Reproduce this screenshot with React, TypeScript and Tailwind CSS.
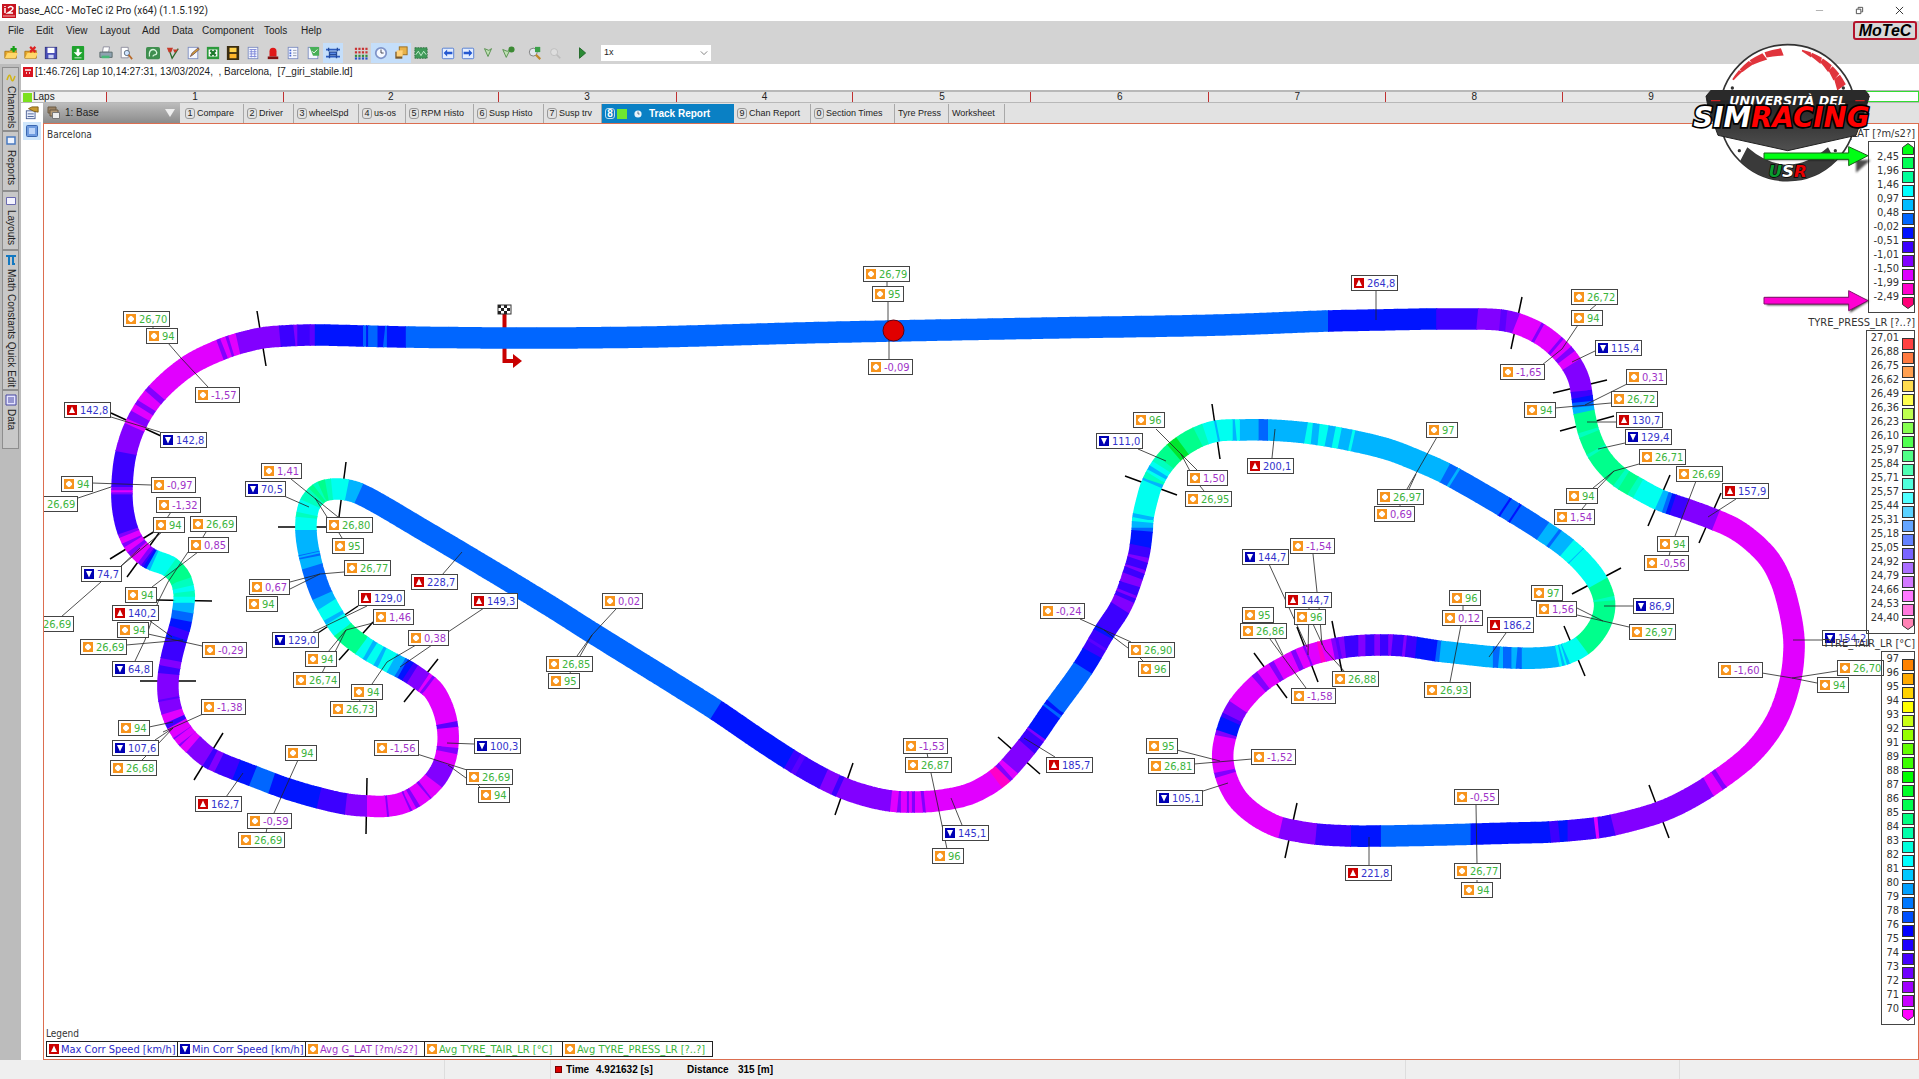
import React from 'react';

type Pt = [number, number];

/* ---------- track geometry ---------- */

const ORIGIN_X = 44;
const ORIGIN_Y = 124;

const CENTRE: Pt[] = [
  [405, 337], [504, 338], [550, 338], [650, 337], [800, 333], [893, 331], [1050, 328], [1220, 325], [1328, 321], [1377, 320], [1432, 319],
  [1475, 319], [1500, 320], [1518, 324], [1540, 334], [1559, 349], [1572, 365], [1579, 380], [1582, 396], [1584, 412], [1590, 436], [1601, 458],
  [1618, 476], [1639, 489], [1660, 500], [1686, 509], [1713, 519], [1735, 529], [1754, 543], [1770, 560], [1781, 581], [1788, 604], [1793, 630], [1794, 650],
  [1790, 682], [1776, 721], [1752, 753], [1717, 781], [1690, 798], [1660, 812], [1613, 825], [1595, 828], [1550, 832], [1513, 833], [1440, 835],
  [1382, 836], [1350, 836], [1316, 834], [1291, 830], [1276, 826], [1254, 814], [1237, 798], [1227, 779], [1223, 762], [1223, 750], [1226, 735],
  [1231, 720], [1240, 704], [1261, 682], [1288, 665], [1310, 655], [1346, 647], [1380, 645], [1405, 646], [1438, 651], [1456, 653], [1495, 657],
  [1538, 658], [1562, 655], [1583, 645], [1598, 628], [1604, 612], [1604, 599], [1597, 581], [1584, 564], [1567, 548], [1543, 531], [1503, 506],
  [1445, 473], [1423, 463], [1390, 450], [1354, 441], [1307, 433], [1268, 430], [1239, 430], [1217, 431], [1198, 437], [1177, 450], [1162, 466],
  [1152, 484], [1147, 500], [1143, 518], [1142, 532], [1139, 554], [1133, 575], [1121, 606], [1105, 631], [1083, 668], [1052, 711], [1034, 737],
  [1019, 756], [999, 777], [972, 793], [943, 800], [915, 802], [891, 801], [867, 796], [843, 788], [820, 777], [794, 762], [760, 740], [716, 710],
  [670, 681], [591, 632], [550, 606], [430, 534], [360, 494], [347, 490], [335, 489], [321, 492], [311, 502], [307, 514], [306, 531], [309, 553],
  [319, 588], [331, 612], [344, 631], [364, 647], [388, 661], [407, 671], [422, 681], [433, 690], [442, 706], [447, 724], [448, 743], [444, 763],
  [436, 778], [422, 792], [405, 802], [388, 806], [367, 806], [346, 804], [319, 798], [285, 788], [253, 776], [222, 764], [208, 757], [196, 747],
  [185, 736], [175, 720], [169, 700], [168, 681], [171, 660], [176, 640], [181, 622], [184, 601], [184, 592], [180, 578], [170, 567], [149, 558],
  [136, 546], [128, 531], [123, 510], [122, 487], [126, 453], [137, 422], [155, 395], [188, 366], [220, 350], [237, 344], [262, 338], [284, 336],
  [313, 335], [363, 336],
];

const PALETTE: Record<string, string> = {
  g: '#00e62e', e: '#00ff8c', t: '#00ffbe', c: '#00fff0', s: '#00b4ff', b: '#0066ff',
  d: '#0014ff', i: '#3c00ff', v: '#8200ff', m: '#e100ff', k: '#ff00c8', w: '#5a00ff',
};

/* each entry: x, y, colour that starts there */
const BANDS: [number, number, string][] = [
  [405, 337, 'b'], [1328, 321, 'd'], [1436, 319, 'i'], [1477, 319, 'v'], [1500, 320, 'w'], [1506, 321, 'v'], [1516, 323, 'm'], [1536, 332, 'v'],
  [1539, 334, 'm'], [1554, 345, 'v'], [1557, 347, 'm'], [1563, 353, 'v'], [1566, 357, 'm'], [1571, 364, 'v'], [1581, 391, 'i'], [1582, 397, 'd'], [1583, 402, 'b'], [1584, 407, 's'], [1584, 412, 'e'],
  [1588, 430, 't'], [1590, 434, 'e'], [1596, 449, 't'], [1598, 452, 'e'], [1620, 477, 't'], [1624, 479, 'e'], [1633, 486, 't'], [1638, 489, 'c'],
  [1659, 500, 's'], [1665, 502, 'b'], [1669, 503, 'd'], [1673, 505, 'i'], [1685, 509, 'v'], [1716, 520, 'm'],
  [1721, 778, 'v'], [1717, 781, 'm'], [1709, 787, 'v'], [1613, 825, 'i'], [1598, 828, 'm'], [1595, 828, 'i'], [1567, 830, 'd'], [1559, 831, 'i'],
  [1550, 832, 'd'], [1471, 835, 'b'], [1381, 836, 'd'], [1351, 836, 'i'], [1316, 834, 'v'], [1281, 828, 'm'], [1226, 775, 'v'], [1225, 771, 'm'],
  [1226, 737, 'v'], [1227, 733, 'd'], [1231, 721, 'i'], [1232, 717, 'v'], [1238, 707, 'm'], [1259, 684, 'v'], [1263, 680, 'm'], [1274, 673, 'v'],
  [1278, 670, 'm'], [1295, 661, 'v'], [1299, 659, 'm'], [1307, 656, 'v'], [1309, 655, 'm'], [1319, 652, 'k'], [1323, 651, 'm'], [1333, 649, 'v'],
  [1337, 648, 'w'], [1340, 648, 'v'], [1345, 647, 'i'], [1358, 645, 'v'], [1365, 645, 'i'], [1374, 645, 'v'], [1380, 645, 'i'], [1388, 645, 'v'],
  [1392, 645, 'i'], [1403, 646, 'v'], [1406, 646, 'i'], [1416, 647, 'd'], [1436, 651, 'b'], [1440, 651, 's'], [1493, 657, 'b'], [1499, 657, 's'],
  [1503, 657, 'b'], [1511, 658, 's'], [1517, 658, 'b'], [1522, 658, 's'], [1557, 656, 'c'], [1560, 656, 's'], [1562, 655, 'c'], [1564, 655, 's'],
  [1566, 654, 'c'], [1582, 646, 'e'], [1604, 601, 't'], [1604, 598, 'e'], [1598, 583, 'c'], [1576, 557, 's'], [1575, 556, 'c'], [1567, 548, 's'],
  [1555, 539, 'b'], [1553, 538, 's'], [1543, 531, 'b'], [1516, 514, 'd'], [1514, 513, 'b'], [1506, 508, 'd'], [1504, 507, 'b'], [1455, 478, 's'],
  [1452, 477, 'b'], [1445, 473, 's'], [1353, 441, 'c'], [1350, 440, 's'], [1340, 438, 'c'], [1334, 437, 's'], [1327, 436, 'c'], [1319, 435, 's'],
  [1312, 434, 'c'], [1306, 433, 's'], [1268, 430, 'b'], [1259, 430, 's'], [1240, 430, 'c'], [1236, 430, 's'], [1233, 430, 'c'], [1218, 431, 's'],
  [1216, 431, 'c'], [1205, 434, 't'], [1198, 437, 'e'], [1182, 446, 'g'], [1173, 452, 'e'], [1164, 461, 't'], [1161, 466, 'c'], [1158, 471, 's'], [1156, 474, 'c'],
  [1155, 477, 't'], [1153, 481, 's'], [1152, 484, 'c'], [1144, 515, 's'], [1143, 519, 'c'], [1143, 522, 's'], [1142, 528, 'b'], [1142, 531, 'd'],
  [1141, 546, 'i'], [1139, 556, 'v'], [1138, 560, 'i'], [1136, 567, 'v'], [1135, 570, 'i'], [1133, 576, 'v'], [1130, 584, 'i'], [1127, 592, 'v'], [1126, 595, 'i'],
  [1124, 598, 'v'], [1120, 608, 'i'], [1106, 630, 'd'], [1103, 634, 'i'], [1098, 643, 'w'], [1096, 646, 'i'], [1092, 653, 'd'], [1083, 668, 'b'], [1055, 707, 'd'], [1053, 709, 'b'],
  [1051, 712, 'd'], [1037, 733, 'v'], [1035, 736, 'i'], [1027, 747, 'v'], [1010, 767, 'm'], [1006, 771, 'v'], [1003, 774, 'k'], [996, 780, 'm'],
  [925, 802, 'v'], [922, 802, 'm'], [915, 802, 'v'], [912, 802, 'm'], [909, 802, 'v'], [907, 802, 'm'], [901, 802, 'v'], [898, 801, 'm'], [891, 801, 'v'], [840, 787, 'i'], [835, 785, 'v'],
  [824, 778, 'i'], [800, 767, 'w'], [795, 764, 'i'], [789, 760, 'd'], [716, 710, 'b'], [359, 493, 's'], [347, 490, 'c'], [332, 489, 't'], [327, 490, 'e'], [322, 492, 't'],
  [319, 493, 'e'], [316, 496, 't'], [310, 504, 'c'], [307, 514, 't'], [306, 518, 'c'], [306, 530, 's'], [309, 553, 'b'], [309, 554, 's'], [310, 556, 'b'], [310, 558, 's'],
  [312, 567, 'b'], [322, 596, 's'], [327, 604, 'c'], [334, 615, 's'], [336, 618, 'c'], [343, 629, 'e'], [362, 645, 'c'], [368, 650, 's'], [371, 652, 'c'],
  [379, 656, 's'], [382, 658, 'c'], [392, 663, 's'], [400, 667, 'b'], [403, 669, 'd'], [408, 672, 'i'], [412, 674, 'v'], [424, 682, 'm'], [426, 684, 'v'], [428, 686, 'm'],
  [447, 723, 'w'], [447, 728, 'm'], [447, 747, 'v'], [446, 752, 'm'], [444, 763, 'v'], [434, 781, 'm'], [425, 790, 'v'], [424, 791, 'm'], [415, 797, 'v'], [411, 799, 'm'],
  [408, 801, 'v'], [406, 802, 'm'], [388, 806, 'v'], [386, 806, 'm'], [367, 806, 'v'], [346, 804, 'i'], [319, 798, 'd'], [272, 783, 'b'], [253, 776, 'd'], [236, 770, 'i'],
  [219, 762, 'v'], [213, 759, 'i'], [208, 757, 'v'], [193, 744, 'm'], [188, 739, 'v'], [187, 738, 'm'], [183, 733, 'v'], [182, 732, 'm'], [177, 724, 'i'], [174, 719, 'm'], [171, 712, 'v'],
  [169, 700, 'w'], [169, 698, 'v'], [169, 674, 'i'], [170, 667, 'v'], [171, 660, 'i'], [176, 640, 'd'], [177, 637, 'i'], [179, 629, 'd'], [181, 620, 'b'], [182, 612, 's'], [184, 603, 'c'],
  [184, 597, 't'], [184, 592, 'c'], [183, 587, 't'], [181, 581, 'e'], [174, 570, 't'], [170, 567, 'c'], [154, 560, 's'], [152, 559, 'd'], [149, 558, 'i'], [147, 557, 'v'],
  [144, 555, 'm'], [138, 549, 'v'], [136, 546, 'm'], [133, 542, 'v'], [132, 539, 'm'], [129, 534, 'v'], [128, 531, 'i'], [122, 494, 'v'], [122, 492, 'm'], [122, 490, 'v'], [122, 487, 'i'], [126, 453, 'v'],
  [134, 427, 'm'], [136, 423, 'v'], [140, 416, 'm'], [144, 410, 'v'], [147, 406, 'm'], [153, 398, 'v'], [157, 393, 'm'], [220, 350, 'v'], [224, 348, 'm'],
  [228, 346, 'v'], [231, 345, 'm'], [238, 343, 'v'], [280, 336, 'i'], [294, 335, 'v'], [297, 335, 'i'], [310, 335, 'w'], [315, 335, 'd'],
  [363, 336, 'b'], [366, 336, 'd'], [368, 336, 'b'], [378, 336, 'd'], [384, 336, 'b'], [387, 336, 'd'],
];

function sampleLoop(points: Pt[], steps: number): Pt[] {
  const out: Pt[] = [];
  const n = points.length;
  for (let k = 0; k < n; k++) {
    const p0 = points[(k - 1 + n) % n];
    const p1 = points[k];
    const p2 = points[(k + 1) % n];
    const p3 = points[(k + 2) % n];
    const d01 = Math.sqrt(Math.hypot(p1[0] - p0[0], p1[1] - p0[1]));
    const d12 = Math.sqrt(Math.hypot(p2[0] - p1[0], p2[1] - p1[1]));
    const d23 = Math.sqrt(Math.hypot(p3[0] - p2[0], p3[1] - p2[1]));
    const count = Math.max(steps, Math.round(d12 * d12));
    const tangent = (a: number): [number, number] => [
      p2[a] - p1[a] + d12 * ((p1[a] - p0[a]) / d01 - (p2[a] - p0[a]) / (d01 + d12)),
      p2[a] - p1[a] + d12 * ((p3[a] - p2[a]) / d23 - (p3[a] - p1[a]) / (d12 + d23)),
    ];
    const mx = tangent(0);
    const my = tangent(1);
    for (let s = 0; s < count; s++) {
      const t = s / count;
      const t2 = t * t;
      const t3 = t2 * t;
      const h = (a: number, m: [number, number]) =>
        (2 * t3 - 3 * t2 + 1) * p1[a] + (t3 - 2 * t2 + t) * m[0] + (-2 * t3 + 3 * t2) * p2[a] + (t3 - t2) * m[1];
      out.push([h(0, mx), h(1, my)]);
    }
  }
  return out;
}

function buildTrack() {
  const line = sampleLoop(CENTRE, 6);
  const marks = BANDS.map(([x, y, c]) => {
    let best = 0;
    let bestD = Infinity;
    line.forEach((p, k) => {
      const d = (p[0] - x) ** 2 + (p[1] - y) ** 2;
      if (d < bestD) {
        bestD = d;
        best = k;
      }
    });
    return { k: best, c };
  }).sort((a, b) => a.k - b.k);
  return marks.map((m, j) => {
    const end = j + 1 < marks.length ? marks[j + 1].k : line.length;
    const pts: string[] = [];
    for (let k = m.k; k <= end + 1; k++) {
      const p = line[k % line.length];
      pts.push(`${p[0].toFixed(1)},${p[1].toFixed(1)}`);
    }
    return { points: pts.join(' '), color: PALETTE[m.c] };
  });
}

const TRACK = buildTrack();

const TICKS: number[][] = [
  [257, 311, 266, 366], [111, 413, 161, 436], [110, 559, 160, 528], [127, 577, 159, 533], [157, 600, 212, 601], [140, 681, 196, 681],
  [223, 733, 194, 780], [367, 778, 366, 834], [346, 462, 339, 517], [278, 527, 327, 527], [358, 606, 318, 633], [373, 622, 339, 660],
  [438, 659, 404, 702], [853, 763, 835, 815], [998, 737, 1040, 774], [1125, 476, 1177, 495], [1212, 404, 1220, 459], [1621, 568, 1572, 594],
  [1564, 626, 1585, 676], [1607, 380, 1553, 393], [1614, 416, 1560, 431], [1332, 621, 1342, 672], [1297, 627, 1318, 682], [1254, 653, 1287, 698],
  [1297, 803, 1285, 858], [1649, 785, 1669, 838], [1670, 475, 1648, 526], [1721, 493, 1699, 543], [1522, 297, 1511, 349],
];

const LEADERS: number[][] = [
  [168, 343, 181, 358, 195, 373, 208, 387], [153, 326, 153, 329], [111, 417, 160, 432], [92, 483, 151, 485], [78, 498, 111, 487],
  [171, 512, 167, 518], [162, 532, 120, 567], [140, 548, 120, 567], [101, 582, 61, 617], [206, 532, 203, 537], [198, 552, 152, 587],
  [188, 552, 168, 582, 158, 602, 145, 640, 135, 661], [150, 621, 172, 637], [148, 634, 202, 646], [126, 645, 183, 640],
  [291, 479, 338, 517], [315, 498, 327, 517], [284, 496, 309, 507], [339, 533, 342, 538], [344, 572, 320, 574, 290, 582], [320, 574, 290, 589],
  [442, 575, 462, 552], [367, 606, 313, 632], [373, 623, 346, 630, 328, 652], [346, 630, 335, 652], [325, 667, 322, 673],
  [484, 608, 448, 632], [432, 645, 400, 667], [416, 645, 387, 662, 372, 684], [360, 700, 359, 702], [203, 714, 163, 732], [149, 727, 173, 722],
  [155, 740, 173, 728], [158, 744, 173, 728], [147, 755, 142, 760], [298, 760, 274, 813], [267, 828, 266, 833], [226, 797, 243, 773],
  [417, 754, 467, 770], [448, 765, 466, 778], [478, 785, 480, 787], [474, 744, 447, 743], [887, 282, 887, 286], [888, 300, 888, 322],
  [889, 338, 889, 359], [616, 609, 592, 635, 577, 656], [592, 635, 580, 656], [570, 672, 571, 674], [1156, 429, 1198, 471], [1181, 454, 1190, 471],
  [1200, 486, 1204, 491], [1138, 449, 1166, 461], [1080, 619, 1131, 642], [1104, 630, 1128, 648], [1139, 657, 1143, 661], [927, 753, 928, 758],
  [931, 773, 947, 849], [951, 798, 962, 825], [1024, 738, 1055, 757], [1177, 750, 1220, 761], [1194, 764, 1252, 759], [1203, 791, 1228, 783],
  [1272, 458, 1275, 429], [1437, 437, 1407, 489], [1416, 474, 1409, 489], [1400, 504, 1400, 506], [1313, 554, 1317, 592], [1269, 564, 1307, 647],
  [1309, 607, 1308, 655], [1313, 624, 1325, 650, 1345, 672], [1319, 607, 1322, 645], [1270, 639, 1306, 688], [1275, 639, 1283, 655], [1463, 605, 1463, 610],
  [1461, 625, 1450, 682], [1506, 633, 1489, 657], [1577, 608, 1603, 621], [1577, 615, 1629, 627], [1633, 606, 1604, 606], [1555, 408, 1611, 403],
  [1627, 384, 1585, 405], [1616, 422, 1587, 422], [1625, 443, 1598, 449], [1639, 464, 1614, 471, 1593, 488], [1614, 471, 1598, 488],
  [1587, 503, 1582, 509], [1476, 805, 1477, 864], [1477, 880, 1477, 883], [1369, 837, 1369, 865], [1696, 481, 1675, 536], [1670, 552, 1669, 556],
  [1736, 499, 1708, 517], [1822, 640, 1793, 640], [1762, 673, 1792, 678, 1817, 683], [1837, 671, 1792, 678], [1376, 291, 1376, 320],
  [1578, 325, 1562, 349, 1542, 365], [1597, 304, 1590, 310], [1595, 351, 1572, 362],
];

/* kind: o = average, u = maximum, n = minimum */
const LABELS: [string, number, number, string][] = [
  ['o', 123, 311, '26,70'], ['o', 146, 328, '94'], ['o', 195, 387, '-1,57'], ['u', 64, 402, '142,8'], ['n', 160, 432, '142,8'], ['o', 61, 476, '94'],
  ['o', 151, 477, '-0,97'], ['o', 31, 496, '26,69'], ['o', 156, 497, '-1,32'], ['o', 153, 517, '94'], ['o', 190, 516, '26,69'], ['o', 188, 537, '0,85'],
  ['n', 81, 566, '74,7'], ['o', 261, 463, '1,41'], ['n', 245, 481, '70,5'], ['o', 326, 517, '26,80'], ['o', 332, 538, '95'], ['o', 344, 560, '26,77'],
  ['o', 27, 616, '26,69'], ['o', 125, 587, '94'], ['u', 112, 605, '140,2'], ['o', 117, 622, '94'], ['o', 80, 639, '26,69'], ['n', 112, 661, '64,8'],
  ['o', 202, 642, '-0,29'], ['o', 249, 579, '0,67'], ['o', 246, 596, '94'], ['u', 411, 574, '228,7'], ['u', 358, 590, '129,0'], ['u', 471, 593, '149,3'],
  ['o', 373, 609, '1,46'], ['n', 272, 632, '129,0'], ['o', 408, 630, '0,38'], ['o', 305, 651, '94'], ['o', 293, 672, '26,74'], ['o', 351, 684, '94'],
  ['o', 330, 701, '26,73'], ['o', 201, 699, '-1,38'], ['o', 118, 720, '94'], ['n', 112, 740, '107,6'], ['o', 110, 760, '26,68'], ['o', 285, 745, '94'],
  ['o', 374, 740, '-1,56'], ['n', 474, 738, '100,3'], ['o', 466, 769, '26,69'], ['o', 478, 787, '94'], ['u', 195, 796, '162,7'], ['o', 247, 813, '-0,59'],
  ['o', 238, 832, '26,69'], ['o', 863, 266, '26,79'], ['o', 872, 286, '95'], ['o', 868, 359, '-0,09'], ['o', 602, 593, '0,02'], ['o', 546, 656, '26,85'],
  ['o', 548, 673, '95'], ['o', 1133, 412, '96'], ['n', 1096, 433, '111,0'], ['o', 1040, 603, '-0,24'], ['o', 1128, 642, '26,90'], ['o', 1138, 661, '96'],
  ['o', 903, 738, '-1,53'], ['o', 905, 757, '26,87'], ['u', 1046, 757, '185,7'], ['n', 942, 825, '145,1'], ['o', 932, 848, '96'], ['o', 1146, 738, '95'],
  ['o', 1148, 758, '26,81'], ['n', 1156, 790, '105,1'], ['o', 1187, 470, '1,50'], ['o', 1185, 491, '26,95'], ['u', 1247, 458, '200,1'], ['o', 1426, 422, '97'],
  ['o', 1377, 489, '26,97'], ['o', 1374, 506, '0,69'], ['o', 1524, 402, '94'], ['o', 1611, 391, '26,72'], ['u', 1616, 412, '130,7'], ['n', 1625, 429, '129,4'],
  ['o', 1639, 449, '26,71'], ['o', 1566, 488, '94'], ['o', 1554, 509, '1,54'], ['o', 1290, 538, '-1,54'], ['n', 1242, 549, '144,7'], ['u', 1285, 592, '144,7'],
  ['o', 1242, 607, '95'], ['o', 1294, 609, '96'], ['o', 1240, 623, '26,86'], ['o', 1449, 590, '96'], ['o', 1442, 610, '0,12'], ['u', 1487, 617, '186,2'],
  ['o', 1531, 585, '97'], ['o', 1536, 601, '1,56'], ['n', 1633, 598, '86,9'], ['o', 1629, 624, '26,97'], ['o', 1332, 671, '26,88'], ['o', 1291, 688, '-1,58'],
  ['o', 1424, 682, '26,93'], ['o', 1251, 749, '-1,52'], ['o', 1454, 789, '-0,55'], ['o', 1454, 863, '26,77'], ['o', 1461, 882, '94'], ['u', 1345, 865, '221,8'],
  ['o', 1676, 466, '26,69'], ['u', 1722, 483, '157,9'], ['o', 1657, 536, '94'], ['o', 1644, 555, '-0,56'], ['n', 1822, 630, '154,2'], ['o', 1718, 662, '-1,60'],
  ['o', 1837, 660, '26,70'], ['o', 1817, 677, '94'], ['o', 1626, 369, '0,31'], ['n', 1595, 340, '115,4'], ['o', 1571, 289, '26,72'], ['o', 1571, 310, '94'],
  ['o', 1500, 364, '-1,65'], ['u', 1351, 275, '264,8'],
];

function Marker({ kind }: { kind: string }) {
  return (
    <svg viewBox="0 0 10 10" className="size-[10px] shrink-0" aria-hidden="true">
      <rect width="10" height="10" fill={kind === 'o' ? '#f7941d' : kind === 'u' ? '#cc0000' : '#0000b4'} />
      {kind === 'o' && <path d="M4.300 2h1.400L8 4.300v1.400L5.700 8H4.300L2 5.700V4.300z" fill="#fff" />}
      {kind === 'u' && <path d="M5 1.500L8 8H2z" fill="#fff" />}
      {kind === 'n' && <path d="M5 8.500L2 2H8z" fill="#fff" />}
    </svg>
  );
}

function ValueLabel({ kind, x, y, text }: { kind: string; x: number; y: number; text: string }) {
  const tone = kind !== 'o' ? 'text-[#3333cc]' : /^-?\d,/.test(text) ? 'text-[#a033c8]' : 'text-[#3cb43c]';
  return (
    <span
      className={`absolute flex h-4 items-center gap-[3px] border border-[#444] bg-white px-[2px] text-[11px] leading-none whitespace-nowrap ${tone}`}
      style={{ left: x - ORIGIN_X, top: y - ORIGIN_Y }}
    >
      <Marker kind={kind} />
      {text}
    </span>
  );
}

/* ---------- colour scales ---------- */

const G_COLORS = ['#00ff55', '#00ff99', '#00ffff', '#00bbff', '#0066ff', '#0011ff', '#3c00ff', '#8200ff', '#dc00ff', '#ff00cc'];
const G_VALUES = ['2,45', '1,96', '1,46', '0,97', '0,48', '-0,02', '-0,51', '-1,01', '-1,50', '-1,99', '-2,49'];
const P_COLORS = ['#ff4040', '#ff7a40', '#ffa050', '#ffdc50', '#ffff50', '#beff50', '#87ff50', '#50ff50', '#50ff87', '#50ffb4', '#50ffdc', '#50ffff', '#5ad2ff', '#64a5ff', '#6482ff', '#7864ff', '#aa6eff', '#d278ff', '#ff78ff', '#ff78dc'];
const P_VALUES = ['27,01', '26,88', '26,75', '26,62', '26,49', '26,36', '26,23', '26,10', '25,97', '25,84', '25,71', '25,57', '25,44', '25,31', '25,18', '25,05', '24,92', '24,79', '24,66', '24,53', '24,40'];
const T_COLORS = ['#ff8200', '#ffaa00', '#ffd200', '#ffff00', '#c8ff14', '#96ff00', '#64ff00', '#3cff00', '#00ff00', '#00ff28', '#00ff50', '#00ff82', '#00ffaa', '#00ffdc', '#00ffff', '#00c8ff', '#00a0ff', '#0078ff', '#0050ff', '#0000ff', '#1e00ff', '#4600ff', '#6e00ff', '#a000ff', '#c800ff'];
const T_VALUES = ['97', '96', '95', '94', '93', '92', '91', '89', '88', '87', '86', '85', '84', '83', '82', '81', '80', '79', '78', '76', '75', '74', '73', '72', '71', '70'];

function Scale({ title, values, colors, top, bottom }: { title: string; values: string[]; colors: string[]; top?: string; bottom: string }) {
  return (
    <div className="flex flex-col items-end">
      <div className="flex h-[17px] items-center pt-[2px] whitespace-nowrap">{title}</div>
      <div className={`flex border border-[#444] pb-[3px] pl-1 ${top ? 'pt-px' : ''}`}>
        <div className={`flex flex-col pr-[3px] text-right ${top ? 'pt-[7px]' : ''}`}>
          {values.map((v) => (
            <span key={v} className="h-[14px] leading-[14px]">{v}</span>
          ))}
        </div>
        <div className={`flex w-3 flex-col gap-[2px] ${top ? '' : 'pt-[7px]'}`}>
          {top && (
            <svg viewBox="0 0 12 12" className="size-3"><path d="M.5 11.500V4.500L6 .5L11.500 4.500V11.500z" fill={top} stroke="#333" /></svg>
          )}
          {colors.map((c) => (
            <span key={c} className="size-3 border border-[#333]" style={{ backgroundColor: c }} />
          ))}
          <svg viewBox="0 0 12 12" className="size-3"><path d="M.5 .5V7.500L6 11.500L11.500 7.500V.5z" fill={bottom} stroke="#333" /></svg>
        </div>
      </div>
    </div>
  );
}

/* ---------- toolbar icons ---------- */

function Doc({ children }: { children?: React.ReactNode }) {
  return (<><rect x="2.500" y="1.500" width="11" height="13" fill="#f4f7ff" stroke="#7c8cc0" />{children}</>);
}
const FOLDER = <path d="M1 6h5l1-1h7v9H1z" fill="#e8a92c" stroke="#a87414" />;

const ICONS: Record<string, [string, React.ReactNode]> = {
  open: ['Open', <>{FOLDER}<path d="M1 14l3-6h12l-3 6z" fill="#ffd76a" /><path d="M11 0v7M7.500 3.500h7" stroke="#16a016" strokeWidth="2.500" /></>],
  close: ['Close log', <>{FOLDER}<path d="M1 14l3-6h12l-3 6z" fill="#ffd76a" /><path d="M7 1l6 6M13 1l-6 6" stroke="#d22" strokeWidth="2.500" /></>],
  save: ['Save', <><rect x="1.500" y="1.500" width="13" height="13" fill="#4a4fb8" stroke="#2c3080" /><rect x="4" y="2" width="8" height="6" fill="#fff" /><rect x="5" y="10" width="6" height="4" fill="#cdd3f5" /></>],
  download: ['Download', <><rect x="1" y="0" width="14" height="16" rx="1" fill="#1fa32e" /><path d="M6.500 3h3v4H13l-5 5-5-5h3.500zM4 13h8v1H4z" fill="#fff" /></>],
  print: ['Print', <><path d="M5 1h7l-1 6H4z" fill="#fff" stroke="#889" /><path d="M1 7h14v6H1z" fill="#8ea2b0" stroke="#566" /><path d="M3 11h9v3H3z" fill="#48b878" /></>],
  preview: ['Print preview', <><path d="M2.500 1.500h8v12h-8z" fill="#fff" stroke="#889" /><circle cx="9" cy="8" r="3" fill="#cfe4ff" stroke="#567" /><path d="M11 10l4 5" stroke="#b86a2a" strokeWidth="2" /></>],
  track: ['Track', <><rect x="0" y="1" width="16" height="14" rx="2" fill="#3f8f4f" /><path d="M4 12c-1-5 1-8 4-8s5 3 4 5-4 0-4 3" fill="none" stroke="#d8f5dd" strokeWidth="1.500" /></>],
  flag: ['Flags', <><path d="M3 3l4 11L14 3" fill="none" stroke="#2b6b2b" strokeWidth="1.500" /><path d="M1 2h7l-2 5H3zM8 4h6l-4 4z" fill="#c83a2a" /></>],
  edit: ['Edit', <><Doc /><path d="M5 12l2-4 7-6 1 2-7 6z" fill="#d8a030" stroke="#755" /></>],
  excel: ['Export', <><rect x="1" y="1" width="14" height="14" fill="#2c9a3c" /><rect x="3" y="4" width="10" height="8" fill="#fff" /><path d="M5 5l6 6M11 5l-6 6" stroke="#1c7a2c" strokeWidth="2.500" /></>],
  film: ['Video', <><rect x="1" y="0" width="14" height="16" fill="#3a2c10" /><rect x="4" y="2" width="8" height="5" fill="#ffd24a" /><rect x="4" y="9" width="8" height="5" fill="#ffb52a" /></>],
  grid: ['Table', <><Doc /><path d="M4 4h8M4 6.500h8M4 9h8M4 12h8M6 4v9M10 4v9" stroke="#7d86d8" /></>],
  alarm: ['Alarms', <><path d="M4 12V6a4 4 0 018 0v6z" fill="#e01818" /><rect x="2" y="12" width="12" height="3" fill="#801010" /></>],
  list: ['Details', <><Doc /><path d="M4 5h2M4 8h2M4 11h2" stroke="#4a6ad8" strokeWidth="2" /><path d="M8 5h4M8 8h4M8 11h4" stroke="#8a94a8" /></>],
  map: ['Sections', <><Doc /><path d="M4 1h11v10H8z" fill="#48b058" /><path d="M7 6l2 2 4-4" stroke="#fff" fill="none" /></>],
  car: ['Overlay', <><path d="M0 4h16M0 12h16" stroke="#2c5cc0" strokeWidth="2" /><path d="M4 7h8v3H4zM3 2v4M13 2v4M4 9v5M12 9v5" fill="#5a8ae8" stroke="#234a9a" strokeWidth="1.500" /></>],
  dots: ['Channels', <>{[2, 6, 10, 14].map((x) => [3, 7, 11, 14].map((y, r) => <rect key={`${x}-${y}`} x={x - 1} y={y - 1} width="2.500" height="2.500" fill={['#c83232', '#c83232', '#328c3c', '#2850c8'][r]} />))}</>],
  clock: ['Time', <><circle cx="8" cy="8" r="6" fill="#f4f8ff" stroke="#7f93c8" strokeWidth="2" /><path d="M8 4v4h3" fill="none" stroke="#334" /></>],
  layers: ['Layers', <><rect x="6" y="1" width="9" height="9" fill="#e8b24a" stroke="#96681a" /><rect x="1.500" y="6.500" width="8" height="8" fill="#7a5a2a" /><rect x="3" y="5" width="7" height="7" fill="#ffd27a" /></>],
  wave: ['Graph', <><rect x="1" y="2" width="14" height="12" fill="#3f9a58" stroke="#2a6a3c" strokeDasharray="2 1" /><path d="M2 10l3-4 3 5 3-5 3 4" fill="none" stroke="#d5f5dd" /></>],
  left: ['Previous lap', <><rect x="1.500" y="2.500" width="13" height="12" rx="1" fill="#e4eeff" stroke="#4a76d0" /><path d="M7 4v2.500h6v3H7V12L3 8z" fill="#2458d0" /></>],
  right: ['Next lap', <><rect x="1.500" y="2.500" width="13" height="12" rx="1" fill="#e4eeff" stroke="#4a76d0" /><path d="M9 4v2.500H3v3h6V12l4-4z" fill="#2458d0" /></>],
  vee: ['Marker', <><path d="M4 3l4 9 4-9-3 2z" fill="#bfe0b4" stroke="#4d8a44" /></>],
  veeadd: ['Add marker', <><path d="M2 4l4 9 4-8-3 1z" fill="#bfe0b4" stroke="#4d8a44" /><circle cx="12" cy="4" r="3.500" fill="#3c8a34" /></>],
  zoom: ['Zoom', <><circle cx="6" cy="7" r="4.500" fill="#e2e8ee" stroke="#777" /><path d="M9 10l5 5" stroke="#c08a2a" strokeWidth="2.500" /><path d="M8 1h6v6H8z" fill="#3aa048" /></>],
  zoomoff: ['Zoom out', <><circle cx="7" cy="7" r="4" fill="#dedede" stroke="#bcbcbc" /><path d="M10 10l4 4" stroke="#bcbcbc" strokeWidth="2" /></>],
  play: ['Play', <path d="M4 2l7 6-7 6z" fill="#2a8a34" stroke="#1c6424" />],
};

const TOOL_GROUPS: [string, string[]][] = [
  ['mr-[7px]', ['open', 'close', 'save']],
  ['mr-2', ['download']],
  ['mr-[7px]', ['print', 'preview']],
  ['mr-2', ['track', 'flag', 'edit', 'excel', 'film', 'grid', 'alarm', 'list', 'map', 'car']],
  ['mr-[7px]', ['dots', 'clock', 'layers', 'wave']],
  ['mr-[7px]', ['left', 'right', 'vee', 'veeadd']],
  ['mr-2', ['zoom', 'zoomoff']],
  ['mr-2', ['play']],
];
const ACTIVE = ['car', 'clock', 'layers'];

const MENU: [string, string][] = [
  ['File', 'w-7'], ['Edit', 'w-[30px]'], ['View', 'w-[34px]'], ['Layout', 'w-[42px]'], ['Add', 'w-[30px]'],
  ['Data', 'w-[30px]'], ['Component', 'w-[62px]'], ['Tools', 'w-[37px]'], ['Help', 'w-8'],
];

const TABS: [string, string, string][] = [
  ['1', 'Compare', 'w-[62px]'], ['2', 'Driver', 'w-[50px]'], ['3', 'wheelSpd', 'w-[65px]'], ['4', 'us-os', 'w-[47px]'], ['5', 'RPM Histo', 'w-[68px]'],
  ['6', 'Susp Histo', 'w-[70px]'], ['7', 'Susp trv', 'w-[58px]'], ['8', 'Track Report', 'w-[132px]'], ['9', 'Chan Report', 'w-[77px]'],
  ['0', 'Section Times', 'w-[84px]'], ['', 'Tyre Press', 'w-[54px]'], ['', 'Worksheet', 'w-[56px]'],
];

const LAPS: [string, number][] = [['1', 177], ['2', 215], ['3', 178], ['4', 177], ['5', 178], ['6', 178], ['7', 177], ['8', 177], ['9', 177]];

const SIDE: [string, string, React.ReactNode][] = [
  ['Channels', 'h-16', <path d="M2 9c2-6 3-6 4-2s2 4 4-2" fill="none" stroke="#d2b414" strokeWidth="1.500" />],
  ['Reports', 'h-[60px]', <path d="M2 2h8v7H2z" fill="#eef4ff" stroke="#4a7ac0" strokeWidth="1.500" />],
  ['Layouts', 'h-[59px]', <path d="M1.500 2.500h9v7h-9z" fill="#f4f4ff" stroke="#6a6ab0" />],
  ['Math Constants Quick Edit', 'h-[140px]', <path d="M1 2h10M4 2v9M8 2v8h2" fill="none" stroke="#1478c0" strokeWidth="2" />],
  ['Data', 'h-[59px]', <><path d="M1 1h10v10H1z" fill="#e4e4ff" stroke="#4646a0" /><path d="M3 4h6M3 6h6M3 8h6" stroke="#4646a0" /></>],
];

const LEGEND: [string, string, string, string][] = [
  ['u', 'Max Corr Speed [km/h]', 'text-[#2828c8]', 'w-[131px]'],
  ['n', 'Min Corr Speed [km/h]', 'text-[#2828c8]', 'w-[128px]'],
  ['o', 'Avg G_LAT [?m/s2?]', 'text-[#a033c8]', 'w-[119px]'],
  ['o', 'Avg TYRE_TAIR_LR [°C]', 'text-[#3cb43c]', 'w-[138px]'],
  ['o', 'Avg TYRE_PRESS_LR [?..?]', 'text-[#3cb43c]', 'w-[150px]'],
];

/* ---------- badge and arrows over the right-hand side ---------- */

/* one wedge of the rev counter, tapering from depth d1 to depth d2 */
function wedge(a1: number, a2: number, d1: number, d2: number) {
  const at = (a: number, r: number) => {
    const t = (a * Math.PI) / 180;
    return `${(443 + r * Math.cos(t)).toFixed(1)} ${(338 - r * Math.sin(t)).toFixed(1)}`;
  };
  const mid = (a1 + a2) / 2;
  return `M${at(a1, 194)}Q${at(mid, 194.5)} ${at(a2, 194)}L${at(a2 - 2, 194 - d2)}Q${at(mid, 194 - (d1 + d2) / 2)} ${at(a1, 194 - d1)}z`;
}

const WEDGES = [
  wedge(149, 139, 5, 11), wedge(138, 127, 12, 16), wedge(126, 113, 16, 23), wedge(111, 96, 17, 22),
  wedge(77, 69, 5, 14), wedge(68, 58, 11, 18), wedge(57, 47, 14, 22), wedge(46, 37, 18, 26), wedge(36, 26, 22, 31),
];

function Badge() {
  return (
    <svg viewBox="150 120 687 840" className="pointer-events-none absolute top-10 right-0 w-[229px]" aria-hidden="true">
      <defs>
        <linearGradient id="plate" x1="0" y1="0" x2="0" y2="1">
          <stop offset="0" stopColor="#1c1c1c" />
          <stop offset="1" stopColor="#505050" />
        </linearGradient>
        <filter id="soft"><feGaussianBlur stdDeviation="3" /></filter>
      </defs>
      <circle cx="443" cy="338" r="204" fill="#fff" stroke="#333" strokeWidth="5" />
      <g fill="#e0343c">{WEDGES.map((d) => <path key={d} d={d} />)}</g>
      <g fill="#333"><circle cx="277" cy="264" r="5" /><circle cx="610" cy="264" r="5" /><circle cx="298" cy="452" r="5" /><circle cx="586" cy="452" r="5" /></g>
      <path d="M322 442L300 484A205 205 0 0 0 586 484L564 442Q443 546 322 442z" fill="#3a3a3a" />
      <path d="M212 278h462l14 10-10 34-30 84-205 46-209-46-30-84-6-34z" fill="url(#plate)" stroke="#222" strokeWidth="3" />
      <path d="M200 284l12-14h464l12 14-4 18H204z" fill="#2a2a2a" />
      <path d="M213 302h28M646 302h28" stroke="#c22" strokeWidth="4" />
      <text x="443" y="315" textAnchor="middle" fontFamily="DejaVu Sans" fontWeight="bold" fontStyle="italic" fontSize="38" fill="#fff">UNIVERSITÀ DEL</text>
      <text x="160" y="381" fontFamily="DejaVu Sans" fontWeight="bold" fontStyle="italic" fontSize="83" stroke="#000" strokeWidth="10" paintOrder="stroke" fill="#fff">
        SIM<tspan fill="#f00">RACING</tspan>
      </text>
      <path d="M380 480h260l8 8v30l44-38-30 0-10-14H380z" fill="#000" opacity=".7" filter="url(#soft)" />
      <path d="M372 459h254v-19l58 27-58 30v-19H372z" fill="#00ff14" stroke="#186018" strokeWidth="3" />
      <text x="443" y="532" textAnchor="middle" fontFamily="DejaVu Sans" fontWeight="bold" fontStyle="italic" fontSize="50" stroke="#000" strokeWidth="4" paintOrder="stroke"><tspan fill="#0a9a2e">U</tspan><tspan fill="#fff">S</tspan><tspan fill="#e80000">R</tspan></text>
      <path d="M380 916h250v22l58-36-40-8H380z" fill="#000" opacity=".75" filter="url(#soft)" />
      <path d="M372 892h254v-20l58 30-58 30v-20H372z" fill="#ff00d2" stroke="#80106c" strokeWidth="3" />
    </svg>
  );
}

function TrackMap() {
  return (
    <div className="absolute inset-0">
      <svg viewBox="44 124 1874 935" width="1874" height="935" className="absolute top-0 left-0 max-w-none" role="img" aria-label="Barcelona track map">
        <g stroke="#000" strokeWidth="1.500">
          {TICKS.map(([a, b, c, d], k) => <line key={k} x1={a} y1={b} x2={c} y2={d} />)}
        </g>
        <path d="M504.500 314V361H514" fill="none" stroke="#c80000" strokeWidth="4" />
        <path d="M513 354l9 7-9 7z" fill="#c80000" />
        <rect x="498" y="305" width="13" height="9" fill="#fff" stroke="#333" />
        <path d="M498 305h3v3h-3zM504 305h3v3h-3zM501 308h3v3h-3zM507 308h3v3h-3zM498 311h3v3h-3zM504 311h3v3h-3z" fill="#222" />
        <g fill="none" strokeWidth="21.500">
          {TRACK.map((s, k) => <polyline key={k} points={s.points} stroke={s.color} />)}
        </g>
        <g fill="none" stroke="#222" strokeWidth=".8">
          {LEADERS.map((l, k) => <polyline key={k} points={l.join(' ')} />)}
        </g>
        <circle cx="893.500" cy="330.500" r="10.500" fill="#e00000" stroke="#600010" />
      </svg>
      {LABELS.map(([kind, x, y, text], k) => <ValueLabel key={k} kind={kind} x={x} y={y} text={text} />)}
    </div>
  );
}

export default function App() {
  return (
    <div className="relative flex h-screen flex-col overflow-hidden bg-white font-['Liberation_Sans',sans-serif] text-[10px] leading-none text-[#222]">
      <header className="flex h-[21px] shrink-0 items-center bg-white pl-[2px] font-['Roboto',sans-serif]">
        <svg viewBox="0 0 14 14" className="size-[14px]" aria-hidden="true">
          <rect width="14" height="14" fill="#c81420" />
          <path d="M3 4v5M3 2v1M6 4q3-3 5 0q0 2-5 5h5" stroke="#fff" strokeWidth="1.500" fill="none" />
          <path d="M1 12h12" stroke="#f6b0b0" />
        </svg>
        <h1 className="ml-[2px] flex-1">base_ACC - MoTeC i2 Pro (x64) (1.1.5.192)</h1>
        <div className="flex">
          <button aria-label="Minimise" className="flex w-10 justify-center"><svg viewBox="0 0 10 10" className="size-[9px]"><path d="M1 5h8" stroke="#aaa" /></svg></button>
          <button aria-label="Restore" className="flex w-10 justify-center"><svg viewBox="0 0 10 10" className="size-[9px]" fill="none" stroke="#444"><path d="M1.500 3.500h5v5h-5zM3.500 3V1.500h5v5H7" /></svg></button>
          <button aria-label="Close" className="flex w-10 justify-center"><svg viewBox="0 0 10 10" className="size-[9px]"><path d="M1 1l8 8M9 1l-8 8" stroke="#222" /></svg></button>
        </div>
      </header>

      <div className="h-[43px] shrink-0 bg-[#d3d3d3]">
        <div className="flex h-5 justify-between pr-[2px]">
          <nav className="flex items-center pl-2">
            {MENU.map(([name, w]) => <button key={name} className={`${w} text-left`}>{name}</button>)}
          </nav>
          <div className="flex h-[19px] w-16 items-center justify-center rounded-[3px] border-2 border-[#b4142c] bg-[#d8d8d8] text-[16px] font-bold text-black italic">MoTeC</div>
        </div>
        <div className="flex h-[23px] items-center pl-px">
          {TOOL_GROUPS.map(([gap, names]) => (
            <div key={names[0]} className={`flex ${gap}`}>
              {names.map((n) => (
                <button key={n} aria-label={ICONS[n][0]} className={`flex h-5 w-5 items-center justify-center ${ACTIVE.includes(n) ? 'bg-[#c4defa]' : ''}`}>
                  <svg viewBox="0 0 16 16" className="size-[14px]">{ICONS[n][1]}</svg>
                </button>
              ))}
            </div>
          ))}
          <div className="relative">
            <select aria-label="Playback speed" defaultValue="1x" className="h-4 w-[110px] appearance-none bg-white pl-[3px] text-[9px]">
              <option>1x</option>
            </select>
            <svg viewBox="0 0 10 10" className="pointer-events-none absolute top-1 right-[3px] size-2" fill="none" stroke="#666"><path d="M1 3l4 4 4-4" /></svg>
          </div>
        </div>
      </div>

      <div className="flex min-h-0 flex-1">
        <aside className="flex w-[21px] shrink-0 flex-col bg-[#bcbcbc] pt-[3px] pr-[2px] pl-[2px]">
          {SIDE.map(([name, h, icon]) => (
            <button key={name} className={`flex ${h} shrink-0 flex-col items-center gap-[3px] border border-[#8e8e8e] bg-[#c8c8c8] pt-[3px]`}>
              <svg viewBox="0 0 12 12" className="size-3 shrink-0">{icon}</svg>
              <span className="whitespace-nowrap [writing-mode:vertical-rl]">{name}</span>
            </button>
          ))}
        </aside>

        <div className="flex min-w-0 flex-1 flex-col">
          <div className="flex h-[26px] shrink-0 items-start gap-[2px] pt-[3px] pl-[2px]">
            <svg viewBox="0 0 10 10" className="size-[10px]" aria-hidden="true"><rect width="10" height="10" fill="#d81420" /><path d="M2 3h6M3 6h1M6 6h1" stroke="#fff" strokeWidth="1.500" /></svg>
            <span className="whitespace-pre">[1:46.726] Lap 10,14:27:31, 13/03/2024,  , Barcelona,  [7_giri_stabile.ld]</span>
          </div>
          <div className="flex h-[13px] shrink-0 border-t-2 border-b border-[#b8b8b8] bg-[#e6e6e6]">
            <div className="flex w-[85px] shrink-0 items-center gap-px bg-[#f0f0f0] pl-[2px]"><span className="size-[9px] bg-[#7ce01e]" />Laps</div>
            {LAPS.map(([n, w]) => (
              <div key={n} className="flex min-w-0 basis-0 items-center justify-center border-l border-[#c03030]" style={{ flexGrow: w }}>{n}</div>
            ))}
            <div className="-mt-px min-w-0 basis-0 border border-[#32dc32] bg-white" style={{ flexGrow: 179 }} />
          </div>

          <div className="flex min-h-0 flex-1">
            <div className="flex w-[22px] shrink-0 flex-col items-center">
              <button aria-label="Properties" className="flex h-[19px] w-[19px] items-center justify-center">
                <svg viewBox="0 0 16 16" className="size-[14px]"><rect x="1.500" y="5.500" width="10" height="9" fill="#e8eefc" stroke="#445a90" /><path d="M3 9h7M3 12h7" stroke="#445a90" /><path d="M4 3l4-2h7v6l-5-1z" fill="#c89a30" stroke="#7a5a14" /></svg>
              </button>
              <button aria-label="Window view" className="flex h-[18px] w-[18px] items-center justify-center bg-[#cfe6fb]">
                <svg viewBox="0 0 12 12" className="size-3"><rect x=".5" y=".5" width="11" height="11" rx="1" fill="#6f9ce0" stroke="#3a66b0" /><rect x="3" y="3" width="6" height="6" fill="#bcd4f8" /></svg>
              </button>
            </div>

            <div className="flex min-w-0 flex-1 flex-col">
              <div className="flex h-5 shrink-0 bg-[#e2e2e2]">
                <button className="flex w-[137px] shrink-0 items-center bg-linear-to-b from-[#bcbcbc] to-[#8c8c8c] pr-[5px] pl-1">
                  <svg viewBox="0 0 14 14" className="size-[14px]"><path d="M1 1h8v6H1z" fill="#9a8264" stroke="#6a5a44" /><path d="M3 4h8v6H3z" fill="#b49a78" stroke="#6a5a44" /><path d="M5.500 6.500h7v6h-7z" fill="#eee" stroke="#777" /></svg>
                  <span className="ml-1 flex-1 text-left">1: Base</span>
                  <svg viewBox="0 0 10 8" className="h-2 w-[10px]"><path d="M0 0h10L5 8z" fill="#eee" /></svg>
                </button>
                <div role="tablist" className="flex pt-px pl-[2px]">
                  {TABS.map(([key, name, w]) => {
                    const on = key === '8';
                    return (
                      <button key={name} role="tab" aria-selected={on} className={`flex ${w} shrink-0 items-center gap-[2px] pl-[3px] whitespace-nowrap ${on ? 'bg-[#0a80c4] font-bold text-white' : 'border-r border-[#a8a8a8] text-[9px]'}`}>
                        {key && <span className={`flex h-[11px] w-[10px] shrink-0 items-center justify-center rounded-[3px] border ${on ? 'border-[#bcdcf0]' : 'border-[#999]'}`}>{key}</span>}
                        {on && (
                          <>
                            <span className="size-[10px] bg-[#6ee632]" />
                            <svg viewBox="0 0 10 10" className="mx-[5px] size-2"><circle cx="5" cy="5" r="4.500" fill="#e8f4fc" /><path d="M5 2v3h2" stroke="#456" fill="none" /></svg>
                          </>
                        )}
                        {name}
                      </button>
                    );
                  })}
                </div>
              </div>

              <main className="relative min-h-0 flex-1 overflow-hidden border border-[#dc6e50] bg-white font-['DejaVu_Sans_Condensed','DejaVu_Sans',sans-serif] text-[#333]">
                <TrackMap />
                <p className="absolute top-[6px] left-[3px]">Barcelona</p>
                <section className="absolute bottom-[2px] left-[2px]">
                  <h2 className="mb-[2px]">Legend</h2>
                  <ul className="flex border-l border-[#222] text-[11px]">
                    {LEGEND.map(([kind, text, tone, w]) => (
                      <li key={text} className={`flex h-4 items-center gap-[2px] border-y border-r border-[#222] pl-[2px] whitespace-nowrap ${tone} ${w}`}>
                        <Marker kind={kind} />{text}
                      </li>
                    ))}
                  </ul>
                </section>
                <div className="absolute top-0 right-[3px] flex flex-col items-end text-[11px]">
                  <Scale title="G_LAT [?m/s2?]" values={G_VALUES} colors={G_COLORS} top="#00ff14" bottom="#ff0078" />
                  <Scale title="TYRE_PRESS_LR [?..?]" values={P_VALUES} colors={P_COLORS} bottom="#ff82b4" />
                  <Scale title="TYRE_TAIR_LR [°C]" values={T_VALUES} colors={T_COLORS} bottom="#ff00ff" />
                </div>
              </main>
            </div>
          </div>
        </div>
      </div>

      <footer className="flex h-[19px] shrink-0 bg-[#efefef] font-bold text-black">
        <div className="w-[445px] border-r border-[#ddd]" />
        <div className="w-[106px] border-r border-[#ddd]" />
        <div className="flex flex-1 items-center border-r border-[#ddd] pl-1">
          <span className="mr-1 size-[7px] border border-[#700] bg-[#d00]" />
          <span className="w-[30px]">Time</span>
          <span className="w-[91px]">4.921632 [s]</span>
          <span className="w-[51px]">Distance</span>
          <span>315 [m]</span>
        </div>
        <div className="w-[274px] border-r border-[#ddd]" />
        <div className="w-[239px]" />
      </footer>

      <Badge />
    </div>
  );
}
